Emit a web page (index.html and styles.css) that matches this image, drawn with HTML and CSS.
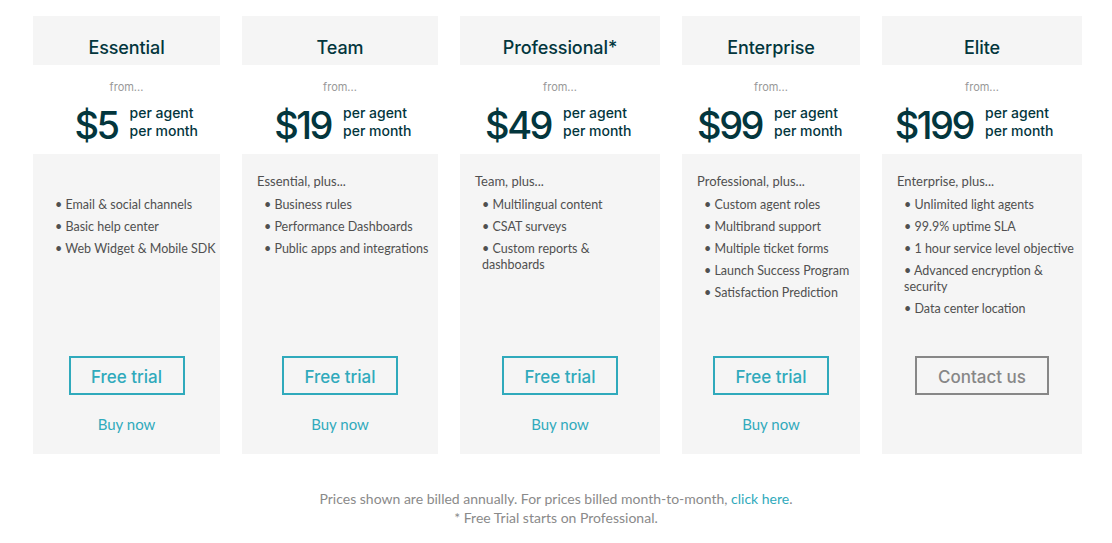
FILE: index.html
```html
<!DOCTYPE html>
<html lang="en">
<head>
<meta charset="utf-8">
<title>Pricing</title>
<link rel="stylesheet" href="styles.css">
</head>
<body>
<main class="page">
  <section class="plans">
    <article class="plan">
      <header class="plan-head"><h2>Essential</h2></header>
      <div class="plan-price">
        <p class="from">from...</p>
        <div class="price-row"><span class="amount">$5</span><span class="unit">per agent<br>per month</span></div>
      </div>
      <div class="plan-body">
        <p class="lead">&nbsp;</p>
        <ul class="features">
          <li>• Email &amp; social channels</li>
          <li>• Basic help center</li>
          <li class="nowrap">• Web Widget &amp; Mobile SDK</li>
        </ul>
        <div class="cta">
          <a class="btn" href="#">Free trial</a>
          <a class="buy" href="#">Buy now</a>
        </div>
      </div>
    </article>

    <article class="plan">
      <header class="plan-head"><h2>Team</h2></header>
      <div class="plan-price">
        <p class="from">from...</p>
        <div class="price-row"><span class="amount">$19</span><span class="unit">per agent<br>per month</span></div>
      </div>
      <div class="plan-body">
        <p class="lead">Essential, plus...</p>
        <ul class="features">
          <li>• Business rules</li>
          <li>• Performance Dashboards</li>
          <li>• Public apps and integrations</li>
        </ul>
        <div class="cta">
          <a class="btn" href="#">Free trial</a>
          <a class="buy" href="#">Buy now</a>
        </div>
      </div>
    </article>

    <article class="plan">
      <header class="plan-head"><h2>Professional*</h2></header>
      <div class="plan-price">
        <p class="from">from...</p>
        <div class="price-row"><span class="amount">$49</span><span class="unit">per agent<br>per month</span></div>
      </div>
      <div class="plan-body">
        <p class="lead">Team, plus...</p>
        <ul class="features">
          <li>• Multilingual content</li>
          <li>• CSAT surveys</li>
          <li>• Custom reports &amp; dashboards</li>
        </ul>
        <div class="cta">
          <a class="btn" href="#">Free trial</a>
          <a class="buy" href="#">Buy now</a>
        </div>
      </div>
    </article>

    <article class="plan">
      <header class="plan-head"><h2>Enterprise</h2></header>
      <div class="plan-price">
        <p class="from">from...</p>
        <div class="price-row"><span class="amount">$99</span><span class="unit">per agent<br>per month</span></div>
      </div>
      <div class="plan-body">
        <p class="lead">Professional, plus...</p>
        <ul class="features">
          <li>• Custom agent roles</li>
          <li>• Multibrand support</li>
          <li>• Multiple ticket forms</li>
          <li>• Launch Success Program</li>
          <li>• Satisfaction Prediction</li>
        </ul>
        <div class="cta">
          <a class="btn" href="#">Free trial</a>
          <a class="buy" href="#">Buy now</a>
        </div>
      </div>
    </article>

    <article class="plan">
      <header class="plan-head"><h2>Elite</h2></header>
      <div class="plan-price">
        <p class="from">from...</p>
        <div class="price-row"><span class="amount">$199</span><span class="unit">per agent<br>per month</span></div>
      </div>
      <div class="plan-body">
        <p class="lead">Enterprise, plus...</p>
        <ul class="features">
          <li>• Unlimited light agents</li>
          <li>• 99.9% uptime SLA</li>
          <li>• 1 hour service level objective</li>
          <li>• Advanced encryption &amp; security</li>
          <li>• Data center location</li>
        </ul>
        <div class="cta">
          <a class="btn btn-gray" href="#">Contact us</a>
        </div>
      </div>
    </article>
  </section>

  <footer class="note">
    <p>Prices shown are billed annually. For prices billed month-to-month, <a href="#">click here</a>.</p>
    <p>* Free Trial starts on Professional.</p>
  </footer>
</main>
</body>
</html>
```

FILE: styles.css
```css
* { box-sizing: border-box; }

html, body {
  margin: 0;
  padding: 0;
  background: #ffffff;
}

body {
  font-family: "Lato", "Open Sans", sans-serif;
  color: #333333;
}

.page {
  padding: 16px 0 0 33px;
}

.plans {
  display: grid;
  grid-template-columns: 187px 196px 200px 178px 200px;
  column-gap: 22px;
}

.plan {
  display: flex;
  flex-direction: column;
}

.plan-head {
  background: #f5f5f5;
  height: 49px;
  padding-top: 20px;
  text-align: center;
}

.plan-head h2 {
  margin: 0;
  font-family: "Inter", "Noto Sans", sans-serif;
  font-weight: 500;
  font-size: 18px;
  line-height: 24px;
  color: #03363d;
  letter-spacing: -0.1px;
}

.plan-price {
  height: 89px;
  padding-top: 14px;
  text-align: center;
}

.from {
  margin: 0;
  font-family: "Inter", sans-serif;
  font-size: 11px;
  line-height: 16px;
  color: #999999;
}

.price-row {
  display: grid;
  grid-template-columns: 1fr 1fr;
  align-items: center;
  margin-top: 5px;
}

.amount {
  justify-self: end;
  margin-right: 7px;
  font-family: "Inter", sans-serif;
  font-weight: 500;
  font-size: 38px;
  line-height: 44px;
  color: #03363d;
  letter-spacing: -2.5px;
  padding-right: 2px;
  position: relative;
  top: 3px;
}

.unit {
  justify-self: start;
  margin-left: 3px;
  font-family: "Inter", sans-serif;
  font-weight: 500;
  font-size: 14px;
  line-height: 18px;
  color: #03363d;
  text-align: left;
  white-space: nowrap;
}

.plan-body {
  background: #f5f5f5;
  padding: 19px 8px 0 15px;
  display: flex;
  flex-direction: column;
  height: 300px;
}

.lead {
  margin: 0 0 8px 0;
  font-size: 13px;
  line-height: 16px;
  color: #505050;
}

.features {
  list-style: none;
  margin: 0;
  padding: 0 0 0 7px;
  flex: 1;
}

.features li {
  font-size: 12.5px;
  line-height: 16px;
  color: #505050;
  margin-bottom: 6px;
}

.features li.nowrap {
  white-space: nowrap;
}

.cta {
  height: 98px;
  display: flex;
  flex-direction: column;
  align-items: center;
  margin-left: -7px;
}

.btn {
  display: block;
  border: 2px solid #30aabc;
  color: #30aabc;
  text-decoration: none;
  font-family: "Inter", sans-serif;
  font-weight: 500;
  font-size: 17px;
  line-height: 33px;
  height: 39px;
  padding: 3px 20px 0 20px;
  text-align: center;
  min-width: 116px;
}

.btn-gray {
  border-color: #878787;
  color: #878787;
  min-width: 134px;
}

.buy {
  margin-top: 19px;
  font-size: 15px;
  line-height: 20px;
  color: #30aabc;
  text-decoration: none;
}

.note {
  text-align: center;
  margin-top: 35px;
  padding-right: 33px;
}

.note p {
  margin: 0;
  font-size: 14px;
  line-height: 19px;
  color: #8a8a8a;
}

.note a {
  color: #30aabc;
  text-decoration: none;
}
```
